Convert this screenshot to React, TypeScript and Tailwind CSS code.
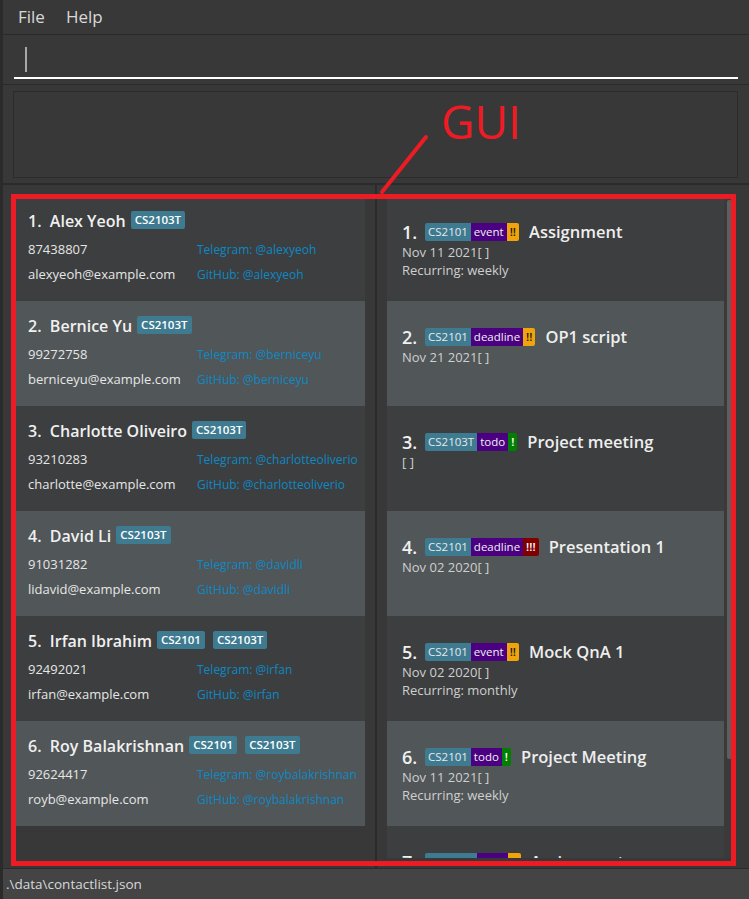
type Person = {
  name: string;
  tags: string[];
  phone: string;
  email: string;
  handle: string;
};

type Task = {
  mod: string;
  kind: string;
  prio: string;
  title: string;
  date: string;
  recur?: string;
};

const people: Person[] = [
  { name: "Alex Yeoh", tags: ["CS2103T"], phone: "87438807", email: "alexyeoh@example.com", handle: "alexyeoh" },
  { name: "Bernice Yu", tags: ["CS2103T"], phone: "99272758", email: "berniceyu@example.com", handle: "berniceyu" },
  { name: "Charlotte Oliveiro", tags: ["CS2103T"], phone: "93210283", email: "charlotte@example.com", handle: "charlotteoliverio" },
  { name: "David Li", tags: ["CS2103T"], phone: "91031282", email: "lidavid@example.com", handle: "davidli" },
  { name: "Irfan Ibrahim", tags: ["CS2101", "CS2103T"], phone: "92492021", email: "irfan@example.com", handle: "irfan" },
  { name: "Roy Balakrishnan", tags: ["CS2101", "CS2103T"], phone: "92624417", email: "royb@example.com", handle: "roybalakrishnan" },
];

const tasks: Task[] = [
  { mod: "CS2101", kind: "event", prio: "!!", title: "Assignment", date: "Nov 11 2021[ ]", recur: "weekly" },
  { mod: "CS2101", kind: "deadline", prio: "!!", title: "OP1 script", date: "Nov 21 2021[ ]" },
  { mod: "CS2103T", kind: "todo", prio: "!", title: "Project meeting", date: "[ ]" },
  { mod: "CS2101", kind: "deadline", prio: "!!!", title: "Presentation 1", date: "Nov 02 2020[ ]" },
  { mod: "CS2101", kind: "event", prio: "!!", title: "Mock QnA 1", date: "Nov 02 2020[ ]", recur: "monthly" },
  { mod: "CS2101", kind: "todo", prio: "!", title: "Project Meeting", date: "Nov 11 2021[ ]", recur: "weekly" },
  { mod: "CS2103T", kind: "todo", prio: "!!", title: "Assignment", date: "Nov 11 2021[ ]" },
];

function prioClass(p: string) {
  if (p === "!") return "bg-[#008000] text-white";
  if (p === "!!!") return "bg-[#800000] text-white";
  return "bg-[#f0a30a] text-[#1a1a1a]";
}

function PersonCard({ p, i }: { p: Person; i: number }) {
  return (
    <div className={`h-[105px] shrink-0 pl-[12px] flex flex-col ${i % 2 === 0 ? "bg-[#3c3e3f]" : "bg-[#515658]"}`}>
      <div className="mt-[13px] h-[24px] flex items-center">
        <span className="text-[16px] font-semibold text-[#f0f0f0]">{i + 1}.&nbsp;&nbsp;{p.name}</span>
        <div className="flex gap-[8px] ml-[5px] -mt-[3px]">
          {p.tags.map((t) => (
            <span key={t} className="h-[18px] leading-[18px] px-[4px] rounded-[2px] bg-[#3e7b91] text-white text-[11.5px] font-semibold">
              {t}
            </span>
          ))}
        </div>
      </div>
      <div className="mt-[4px] h-[25px] flex items-center">
        <span className="w-[169px] text-[13px] text-[#e6e6e6]">{p.phone}</span>
        <span className="text-[12px] text-[#0d89c4]">Telegram: @{p.handle}</span>
      </div>
      <div className="h-[25px] flex items-center">
        <span className="w-[169px] text-[13px] text-[#e6e6e6]">{p.email}</span>
        <span className="text-[12px] text-[#0d89c4]">GitHub: @{p.handle}</span>
      </div>
    </div>
  );
}

function TaskCard({ t, i }: { t: Task; i: number }) {
  return (
    <div className={`h-[105px] shrink-0 pl-[15px] flex flex-col ${i % 2 === 0 ? "bg-[#3c3e3f]" : "bg-[#515658]"}`}>
      <div className="mt-[24px] h-[24px] flex items-center">
        <span className="text-[18px] font-semibold text-[#f0f0f0] w-[23px]">{i + 1}.</span>
        <div className="flex text-[11.5px] h-[18px] leading-[18px]">
          <span className="px-[3px] rounded-l-[2px] bg-[#3e7b91] text-[#e8e8e8]">{t.mod}</span>
          <span className="px-[3px] bg-[#4b0082] text-[#f0f0f0]">{t.kind}</span>
          <span className={`px-[3px] rounded-r-[2px] font-semibold ${prioClass(t.prio)}`}>{t.prio}</span>
        </div>
        <span className="ml-[10px] text-[16.5px] font-semibold text-[#eeeeee]">{t.title}</span>
      </div>
      <div className="-mt-[1px] text-[13px] leading-[18px] text-[#cfcfcf]">{t.date}</div>
      {t.recur && <div className="text-[13px] leading-[18px] text-[#cfcfcf]">Recurring: {t.recur}</div>}
    </div>
  );
}

export default function App() {
  return (
    <div className="relative w-[749px] h-[899px] overflow-hidden flex flex-col bg-[#383838] border-l-[3px] border-[#2b2b2b] font-['Open_Sans',sans-serif]">
      {/* menu */}
      <div className="h-[35px] shrink-0 border-b border-[#2b2b2b] flex items-center pl-[15px] gap-[21px] text-[17px] text-[#d8d8d8]">
        <span>File</span>
        <span>Help</span>
      </div>

      {/* command box */}
      <div className="h-[50px] shrink-0 border-b border-[#2b2b2b] pl-[11px] pr-[11px] pt-[12px]">
        <div className="ml-[11px] w-[2px] h-[25px] bg-[#a8a8a8]" />
        <div className="mt-[5px] h-[2px] bg-white" />
      </div>

      {/* result display */}
      <div className="h-[100px] shrink-0 border-b-2 border-[#2b2b2b] pl-[10px] pr-[11px] pt-[6px]">
        <div className="h-[87px] border border-[#2b2b2b]" />
      </div>

      {/* lists */}
      <div className="flex-1 flex min-h-0">
        <div className="w-[372px] pt-[11px] pl-[13px] pr-[10px] pb-[10px]">
          <div className="h-full overflow-hidden flex flex-col">
            {people.map((p, i) => (
              <PersonCard key={p.name} p={p} i={i} />
            ))}
          </div>
        </div>
        <div className="w-[2px] bg-[#2b2b2b]" />
        <div className="flex-1 pt-[11px] pl-[10px] pb-[10px] flex">
          <div className="w-[337px] h-full overflow-hidden flex flex-col">
            {tasks.map((t, i) => (
              <TaskCard key={i} t={t} i={i} />
            ))}
          </div>
          <div className="w-[11px] h-full bg-[#3a3a3a] pl-[3px] pt-[4px]">
            <div className="w-[5px] h-[559px] rounded-[2px] bg-[#5e5e5e]" />
          </div>
        </div>
      </div>

      {/* status bar */}
      <div className="h-[31px] shrink-0 border-t border-[#2b2b2b] bg-[#444444] flex items-center pl-[3px] text-[13.5px] text-[#d8d8d8]">
        .\data\contactlist.json
      </div>

      {/* annotation overlay */}
      <div className="absolute left-[8px] top-[194px] w-[725px] h-[672px] border-[5px] border-[#ed1c24] pointer-events-none" />
      <svg className="absolute left-[374px] top-[132px] pointer-events-none" width="60" height="66" viewBox="0 0 60 66">
        <line x1="5" y1="60" x2="49" y2="5" stroke="#ed1c24" strokeWidth="4" strokeLinecap="round" />
      </svg>
      <div className="absolute left-[438px] top-[98px] text-[46px] leading-[46px] text-[#ed1c24] pointer-events-none">GUI</div>
    </div>
  );
}
